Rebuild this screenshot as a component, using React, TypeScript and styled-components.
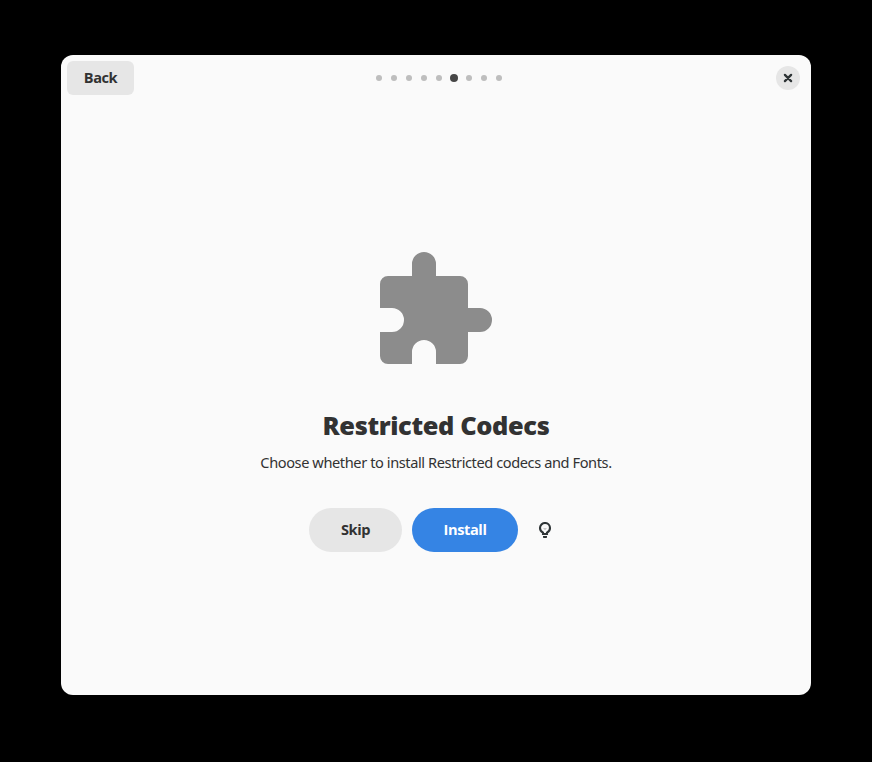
import React from "react";
import styled, { createGlobalStyle } from "styled-components";

const GlobalStyle = createGlobalStyle`
  * { box-sizing: border-box; }
  body { margin: 0; background: #000; font-family: "Noto Sans", "Open Sans", sans-serif; color: #323232; }
  button { font-family: "Open Sans", "Noto Sans", sans-serif; border: 0; padding: 0; margin: 0; color: inherit; }
`;

const Desktop = styled.div`
  width: 872px;
  height: 762px;
  padding: 55px 61px 67px;
  background: #000;
`;

const Window = styled.main`
  display: flex;
  flex-direction: column;
  width: 750px;
  height: 640px;
  border-radius: 12px;
  overflow: hidden;
  background: #fafafa;
`;

const HeaderBar = styled.header`
  display: flex;
  align-items: center;
  justify-content: space-between;
  height: 46px;
  padding: 0 11px 0 6px;
`;

const BackButton = styled.button`
  width: 67px;
  height: 34px;
  padding-bottom: 2px;
  border-radius: 6px;
  background: #e6e6e6;
  font-size: 14.6px;
  font-weight: 700;
  letter-spacing: -0.45px;
`;

const Dots = styled.div`
  display: flex;
  align-items: center;
  margin-right: 31.5px;
`;

const DotCell = styled.div`
  display: flex;
  width: 15px;
  justify-content: center;
`;

const Dot = styled.span<{ $active: boolean }>`
  width: ${(p) => (p.$active ? 8 : 6)}px;
  height: ${(p) => (p.$active ? 8 : 6)}px;
  border-radius: 50%;
  background: ${(p) => (p.$active ? "#464646" : "#bebebe")};
`;

const CloseButton = styled.button`
  display: flex;
  align-items: center;
  justify-content: center;
  width: 24px;
  height: 24px;
  border-radius: 50%;
  background: #e6e6e6;
`;

const Page = styled.section`
  display: flex;
  flex-direction: column;
  align-items: center;
  padding-top: 151px;
`;

const PuzzleIcon = styled.svg`
  display: block;
  width: 112px;
  height: 112px;
`;

const Title = styled.h1`
  margin: 43px 0 0;
  height: 36px;
  font-family: "Open Sans", "Noto Sans", sans-serif;
  font-size: 25.4px;
  line-height: 36px;
  font-weight: 800;
  letter-spacing: -0.38px;
  white-space: nowrap;
`;

const Description = styled.p`
  margin: 9px 0 0;
  height: 20px;
  font-size: 14.6px;
  line-height: 20px;
  letter-spacing: -0.41px;
  white-space: nowrap;
`;

const Actions = styled.div`
  display: flex;
  align-items: center;
  gap: 10px;
  margin: 36px 2px 0 0;
`;

const Pill = styled.button<{ $suggested?: boolean }>`
  width: ${(p) => (p.$suggested ? 106 : 93)}px;
  height: 44px;
  padding: 0 0 2px 1px;
  border-radius: 22px;
  font-size: 14.6px;
  font-weight: 700;
  letter-spacing: -0.4px;
  background: ${(p) => (p.$suggested ? "#3584e4" : "#e6e6e6")};
  color: ${(p) => (p.$suggested ? "#fff" : "#323232")};
`;

const HintButton = styled.button`
  display: flex;
  align-items: center;
  justify-content: center;
  width: 34px;
  height: 34px;
  background: transparent;
`;

const steps = Array.from({ length: 9 }, (_, i) => i);
const currentStep = 5;

export default function App() {
  return (
    <Desktop>
      <GlobalStyle />
      <Window>
        <HeaderBar>
          <BackButton>Back</BackButton>
          <Dots>
            {steps.map((step) => (
              <DotCell key={step}>
                <Dot $active={step === currentStep} />
              </DotCell>
            ))}
          </Dots>
          <CloseButton aria-label="Close">
            <svg width="16" height="16" viewBox="0 0 16 16">
              <path d="M4.900 4.900l6.200 6.200M11.100 4.900l-6.200 6.200" stroke="#2e3436" strokeWidth="2.3" strokeLinecap="round" />
            </svg>
          </CloseButton>
        </HeaderBar>
        <Page>
          <PuzzleIcon viewBox="0 0 112 112">
            <path
              fill="#8c8c8c"
              d="M32 24V12a12 12 0 0 1 24 0v12h24a8 8 0 0 1 8 8v24h12a12 12 0 0 1 0 24H88v24a8 8 0 0 1-8 8H56v-12a12 12 0 0 0-24 0v12H8a8 8 0 0 1-8-8V80h12a12 12 0 0 0 0-24H0V32a8 8 0 0 1 8-8z"
            />
          </PuzzleIcon>
          <Title>Restricted Codecs</Title>
          <Description>Choose whether to install Restricted codecs and Fonts.</Description>
          <Actions>
            <Pill>Skip</Pill>
            <Pill $suggested>Install</Pill>
            <HintButton aria-label="Details">
              <svg width="16" height="16" viewBox="0 0 16 16" fill="none">
                <path d="M6 12v-1.300C4.300 9.700 3 8.300 3 6a5 5 0 0 1 10 0c0 2.300-1.300 3.700-3 4.700V12z" stroke="#2e3436" strokeWidth="2.100" />
                <path d="M6 14h4v1.200a.8.8 0 0 1-.8.8H6.800a.8.8 0 0 1-.8-.8z" fill="#2e3436" />
                <path d="M6 6.300h4L8 8z" fill="#b8b8b8" />
              </svg>
            </HintButton>
          </Actions>
        </Page>
      </Window>
    </Desktop>
  );
}
